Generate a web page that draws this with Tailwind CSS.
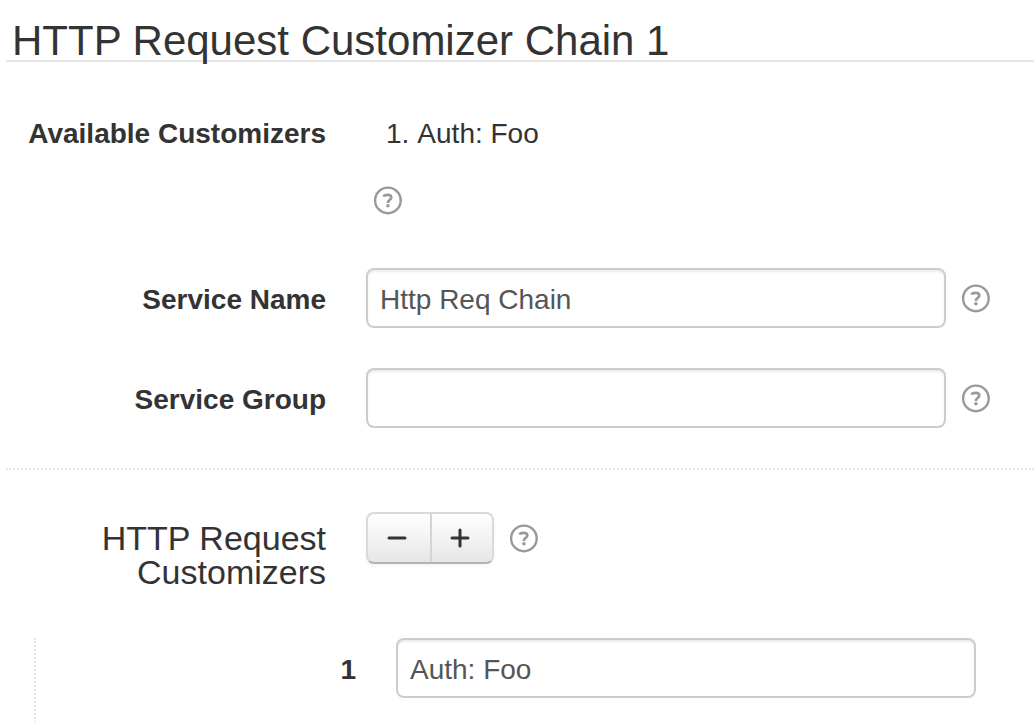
<!DOCTYPE html>
<html lang="en">
<head>
<meta charset="utf-8">
<title>HTTP Request Customizer Chain</title>
<script src="https://cdn.jsdelivr.net/npm/@tailwindcss/browser@4"></script>
</head>
<body class="bg-white font-['Liberation_Sans',Arial,sans-serif] text-[28px] leading-10 text-[#333] overflow-hidden">
<svg class="hidden">
  <symbol id="help" viewBox="0 0 28 28" overflow="visible">
    <circle cx="13.900" cy="14.400" r="12.800" fill="none" stroke="#999" stroke-width="2.400"/>
    <path d="M9.600 10.600C10 9.300 11.400 8.800 13.600 8.800C16.100 8.800 17.300 9.700 17.300 11.400C17.300 13.700 13.900 13.800 13.900 16.900" fill="none" stroke="#999" stroke-width="2.700"/>
    <circle cx="13.900" cy="19.700" r="1.800" fill="#999"/>
  </symbol>
</svg>
<main class="pl-[6px]">
  <h1 class="h-[62px] border-b-2 border-[#e5e5e5] pl-[6px] pt-[21px] text-[42px] leading-10 whitespace-nowrap">HTTP Request Customizer Chain 1</h1>
  <form>
    <section class="border-b-2 border-dotted border-[#e5e5e5] pt-[52px] pb-10">
      <div class="flex gap-10">
        <h2 class="w-80 shrink-0 text-right font-bold">Available Customizers</h2>
        <div>
          <ol class="pl-5"><li class="flex gap-2"><span>1.</span><span>Auth: Foo</span></li></ol>
          <button type="button" aria-label="Help for available customizers" class="mt-8 ml-2 block"><svg class="size-7 overflow-visible"><use href="#help"/></svg></button>
        </div>
      </div>
      <div class="mt-[54px] flex items-center gap-10 pr-11">
        <label for="name" class="w-80 shrink-0 pt-[3px] text-right font-bold">Service Name</label>
        <div class="flex grow items-center gap-4">
          <input id="name" value="Http Req Chain" class="h-15 min-w-0 grow rounded-lg border-2 border-[#ccc] px-3 pt-1 text-[#555] shadow-[inset_0_2px_2px_rgba(0,0,0,0.075)]">
          <button type="button" aria-label="Help for service name"><svg class="size-7 overflow-visible"><use href="#help"/></svg></button>
        </div>
      </div>
      <div class="mt-10 flex items-center gap-10 pr-11">
        <label for="group" class="w-80 shrink-0 pt-[3px] text-right font-bold">Service Group</label>
        <div class="flex grow items-center gap-4">
          <input id="group" class="h-15 min-w-0 grow rounded-lg border-2 border-[#ccc] px-3 pt-1 text-[#555] shadow-[inset_0_2px_2px_rgba(0,0,0,0.075)]">
          <button type="button" aria-label="Help for service group"><svg class="size-7 overflow-visible"><use href="#help"/></svg></button>
        </div>
      </div>
    </section>
    <section class="pt-[42px]">
      <div class="flex items-start gap-10">
        <h2 class="w-80 shrink-0 pt-[9px] text-right text-[34px] leading-[34px]">HTTP Request<br>Customizers</h2>
        <div class="flex items-center gap-4">
          <div class="flex h-[52px] w-32 overflow-hidden rounded-lg border-2 border-[#d9d9d9] border-b-[#b3b3b3] bg-linear-to-b from-white to-[#e6e6e6] shadow-[0_2px_4px_rgba(0,0,0,0.05)]">
            <button type="button" aria-label="Remove" class="flex w-16 shrink-0 items-center justify-center border-r-2 border-[#d4d4d4] pr-1"><svg class="size-5" viewBox="0 0 20 20"><path d="M2 10H18" stroke="#333" stroke-width="3" stroke-linecap="round"/></svg></button>
            <button type="button" aria-label="Add" class="flex flex-1 items-center justify-center pr-1"><svg class="size-5" viewBox="0 0 20 20"><path d="M2 10H18M10 2V18" stroke="#333" stroke-width="3" stroke-linecap="round"/></svg></button>
          </div>
          <button type="button" aria-label="Help for customizers"><svg class="size-7 overflow-visible"><use href="#help"/></svg></button>
        </div>
      </div>
      <div class="mt-[49px] ml-7 flex items-start gap-10 border-l-2 border-dotted border-[#e5e5e5] pr-[58px] pb-10">
        <label for="c1" class="w-80 shrink-0 pt-3 text-right font-bold">1</label>
        <input id="c1" value="Auth: Foo" class="h-15 min-w-0 grow rounded-lg border-2 border-[#ccc] px-3 pt-1 text-[#555] shadow-[inset_0_2px_2px_rgba(0,0,0,0.075)]">
      </div>
    </section>
  </form>
</main>
</body>
</html>
